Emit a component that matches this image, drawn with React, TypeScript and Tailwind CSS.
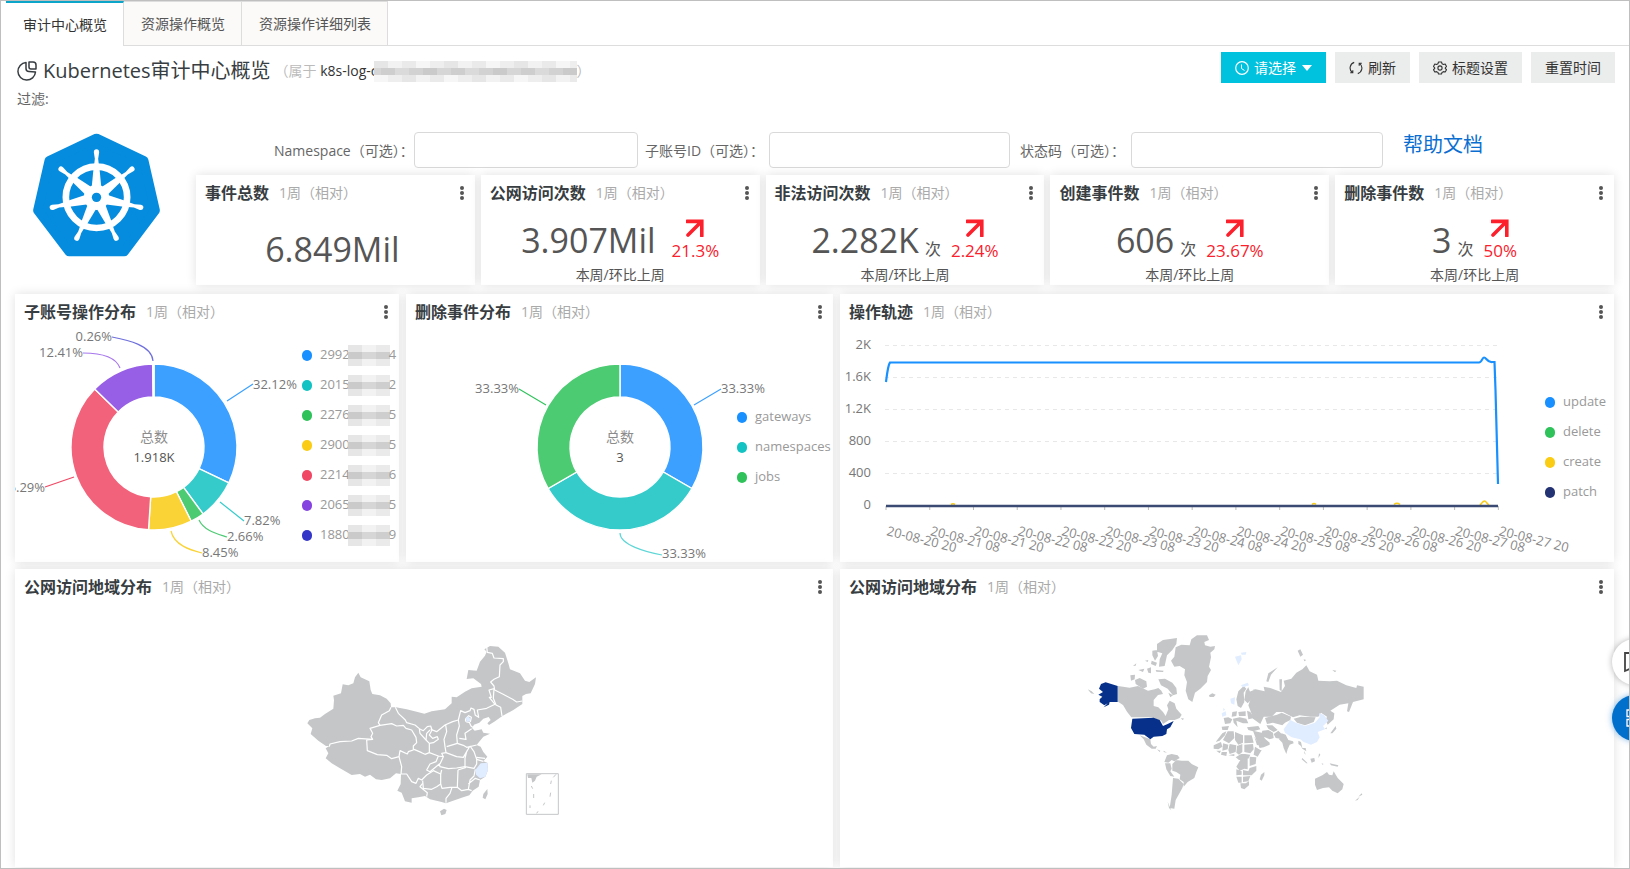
import React, { useState } from 'react';

type Slice = { name: string; tail?: string; value: number; fill: string; dot: string };
type Leader = { d: string; x: number; y: number; end?: boolean; text: string; color: string };

const tabs = ['审计中心概览', '资源操作概览', '资源操作详细列表'];

const stats = [
    { title: '事件总数', value: '6.849Mil' },
    { title: '公网访问次数', value: '3.907Mil', unit: '', rate: '21.3%' },
    { title: '非法访问次数', value: '2.282K', unit: '次', rate: '2.24%' },
    { title: '创建事件数', value: '606', unit: '次', rate: '23.67%' },
    { title: '删除事件数', value: '3', unit: '次', rate: '50%' },
];

const accounts: Slice[] = [
    { name: '2992', tail: '4', value: 32.12, fill: '#3ba0ff', dot: '#1890ff' },
    { name: '2015', tail: '2', value: 7.82, fill: '#36cbcb', dot: '#13c2c2' },
    { name: '2276', tail: '5', value: 2.66, fill: '#4dcb73', dot: '#2fc25b' },
    { name: '2900', tail: '5', value: 8.45, fill: '#fad337', dot: '#facc14' },
    { name: '2214', tail: '6', value: 36.28, fill: '#f2637b', dot: '#f04864' },
    { name: '2065', tail: '5', value: 12.41, fill: '#975fe5', dot: '#8543e0' },
    { name: '1880', tail: '9', value: 0.26, fill: '#5254cf', dot: '#3436c7' },
];

const accountLeaders: Leader[] = [
    { d: 'M138 33C137 17 112 12 97 9', x: 97, y: 13, end: true, text: '0.26%', color: '#6f70dc' },
    { d: 'M105 40C100 27 80 25 68 25', x: 68, y: 29, end: true, text: '12.41%', color: '#a878ec' },
    { d: 'M212 73L238 56', x: 238, y: 61, text: '32.12%', color: '#3ba0ff' },
    { d: 'M59 149L30 159', x: 30, y: 164, end: true, text: '36.29%', color: '#f04864' },
    { d: 'M205 174L229 193', x: 229, y: 197, text: '7.82%', color: '#36cbcb' },
    { d: 'M184 192C189 203 203 206 212 209', x: 212, y: 213, text: '2.66%', color: '#4dcb73' },
    { d: 'M156 203C159 217 175 222 187 225', x: 187, y: 229, text: '8.45%', color: '#fad337' },
];

const deletions: Slice[] = [
    { name: 'gateways', value: 1, fill: '#3ba0ff', dot: '#1890ff' },
    { name: 'namespaces', value: 1, fill: '#36cbcb', dot: '#13c2c2' },
    { name: 'jobs', value: 1, fill: '#4dcb73', dot: '#2fc25b' },
];

const deletionLeaders: Leader[] = [
    { d: 'M288 77L315 61', x: 315, y: 65, text: '33.33%', color: '#3ba0ff' },
    { d: 'M140 77L113 61', x: 113, y: 65, end: true, text: '33.33%', color: '#2fc25b' },
    { d: 'M214 205C214 217 240 224 256 227', x: 256, y: 230, text: '33.33%', color: '#5fd6d6' },
];

const traceSeries = [
    { name: 'update', dot: '#1890ff' },
    { name: 'delete', dot: '#2fc25b' },
    { name: 'create', dot: '#facc14' },
    { name: 'patch', dot: '#223273' },
];

const yTicks = ['2K', '1.6K', '1.2K', '800', '400', '0'];
const xTicks = [
    '20 20', '21 08', '21 20', '22 08', '22 20', '23 08', '23 20', '24 08',
    '24 20', '25 08', '25 20', '26 08', '26 20', '27 08', '27 20',
];

function Mosaic({ cols, rows, size, className }: { cols: number; rows: number; size: number; className?: string }) {
    const cells = Array.from({ length: cols * rows }, (_, i) => {
        const row = Math.floor(i / cols);
        const noise = ((Math.floor(i / 2) * 3 + row) % 5) * 4;
        return row === 1 ? 202 + noise : 230 + noise;
    });
    return (
        <span
            aria-hidden="true"
            className={`inline-grid shrink-0 ${className ?? ''}`}
            style={{ gridTemplateColumns: `repeat(${cols}, ${size}px)`, gridAutoRows: `${size}px` }}
        >
            {cells.map((c, i) => (
                <span key={i} style={{ backgroundColor: `rgb(${c},${c},${c})` }} />
            ))}
        </span>
    );
}

function KubernetesLogo() {
    const spokes = Array.from({ length: 7 }, (_, i) => (i * 360) / 7);
    return (
        <svg viewBox="70 38 380 372" className="h-[124px] w-[127px]" role="img" aria-label="Kubernetes">
            <path
                d="M260 54L402 121 436 270 343 394 178 394 84 270 118 121Z"
                fill="#058cde"
                stroke="#058cde"
                strokeWidth="28"
                strokeLinejoin="round"
            />
            <circle cx="260" cy="231" r="92" fill="none" stroke="#fff" strokeWidth="20" />
            {spokes.map((a) => (
                <g key={a} transform={`translate(260 231) rotate(${a})`} fill="#fff">
                    <path d="M-9 -86L9 -86 14 -34 -14 -34Z" />
                    <path d="M-7 -98L-5 -116 -8 -135Q-8 -144 0 -144Q8 -144 8 -135L5 -116 7 -98Z" />
                </g>
            ))}
            <circle cx="260" cy="231" r="38" fill="#fff" />
            <circle cx="260" cy="231" r="14" fill="#058cde" />
        </svg>
    );
}

function Card({ title, className, children }: { title: string; className?: string; children: React.ReactNode }) {
    return (
        <section className={`flex min-w-0 flex-col overflow-hidden bg-white shadow-[0_0_10px_rgba(0,0,0,0.12)] ${className ?? ''}`}>
            <header className="flex h-[34px] shrink-0 items-center px-[9px] pt-0.5">
                <h2 className="text-base font-bold whitespace-nowrap text-[#373d41]">{title}</h2>
                <span className="ml-2.5 flex-1 text-sm whitespace-nowrap text-[#aaa]">1周（相对）</span>
                <button type="button" aria-label={`${title}菜单`} className="flex h-5 w-2 flex-col items-center justify-center gap-px">
                    <span className="size-1 rounded-full bg-[#555]" />
                    <span className="size-1 rounded-full bg-[#555]" />
                    <span className="size-1 rounded-full bg-[#555]" />
                </button>
            </header>
            {children}
        </section>
    );
}

function StatBody({ value, unit, rate }: { value: string; unit?: string; rate?: string }) {
    if (!rate) {
        return <p className="mt-2 pr-1.5 text-center text-[34px] leading-[64px] text-[#555]">{value}</p>;
    }
    return (
        <div className="mt-1 flex flex-col items-center text-[#555]">
            <div className="flex h-[52px] items-end justify-center">
                <span className="text-[34px] leading-[50px]">{value}</span>
                <span className="ml-1.5 text-base leading-8">{unit}</span>
                <span className="ml-2.5 flex flex-col items-center text-[#fb202c]">
                    <svg viewBox="0 0 18 18" className="size-[18px]" fill="none" stroke="currentColor" strokeWidth="3.6">
                        <path d="M1 2.4H15.8V17M15 3L2 16" strokeLinecap="round" />
                    </svg>
                    <span className="text-[17px] leading-7">{rate}</span>
                </span>
            </div>
            <p className="text-sm leading-5">本周/环比上周</p>
        </div>
    );
}

function Donut({ data, cx, cy, total, leaders }: { data: Slice[]; cx: number; cy: number; total: string; leaders: Leader[] }) {
    const R = 83;
    const r = 50;
    const sum = data.reduce((s, d) => s + d.value, 0);
    const point = (t: number, radius: number) =>
        `${(cx + radius * Math.sin(t * 2 * Math.PI)).toFixed(2)} ${(cy - radius * Math.cos(t * 2 * Math.PI)).toFixed(2)}`;
    let acc = 0;
    return (
        <>
            {data.map((d) => {
                const a = acc / sum;
                acc += d.value;
                const b = acc / sum;
                const large = b - a > 0.5 ? 1 : 0;
                return (
                    <path
                        key={d.name}
                        d={`M${point(a, R)}A${R} ${R} 0 ${large} 1 ${point(b, R)}L${point(b, r)}A${r} ${r} 0 ${large} 0 ${point(a, r)}Z`}
                        fill={d.fill}
                        stroke="#fff"
                        strokeWidth="1.4"
                    />
                );
            })}
            {leaders.map((l) => (
                <g key={l.d}>
                    <path d={l.d} fill="none" stroke={l.color} strokeWidth="1.2" />
                    <text x={l.x} y={l.y} textAnchor={l.end ? 'end' : 'start'} fontSize="13" fill="#777">{l.text}</text>
                </g>
            ))}
            <text x={cx} y={cy - 5} textAnchor="middle" fontSize="14" fill="#8c8c8c">总数</text>
            <text x={cx} y={cy + 15} textAnchor="middle" fontSize="13" fill="#555">{total}</text>
        </>
    );
}

function Legend({ items, className }: { items: { name: string; dot: string; tail?: string }[]; className?: string }) {
    return (
        <ul className={`min-w-0 flex-1 overflow-hidden ${className ?? ''}`}>
            {items.map((it) => (
                <li key={it.name} className="flex h-[30px] items-center text-[13px] text-[#999]">
                    <span className="mr-2 h-[11px] w-2.5 shrink-0 rounded-full" style={{ backgroundColor: it.dot }} />
                    <span>{it.name}</span>
                    {it.tail && (
                        <>
                            <Mosaic cols={6} rows={3} size={7} className="-ml-0.5" />
                            <span className="-ml-px">{it.tail}</span>
                        </>
                    )}
                </li>
            ))}
        </ul>
    );
}

function TraceChart() {
    return (
        <svg viewBox="0 0 700 230" className="h-[230px] w-[700px] shrink-0 overflow-visible">
            {yTicks.map((t, i) => (
                <g key={t}>
                    {i < 5 && <path d={`M45 ${15.5 + i * 32}H661`} stroke="#e8e8e8" strokeDasharray="4 4" />}
                    <text x="31" y={19 + i * 32} textAnchor="end" fontSize="13" fill="#777">{t}</text>
                </g>
            ))}
            {xTicks.map((t, i) => {
                const x = 46 + i * 43.74;
                return (
                    <g key={t}>
                        <path d={`M${x} 176V180`} stroke="#bbb" />
                        <text x={x} y="205" fontSize="13" fill="#888" transform={`rotate(14 ${x} 205)`}>{`20-08-${t}`}</text>
                    </g>
                );
            })}
            <path d="M111 174.5Q113 173 115 174.5M472 174.5Q474 172.5 476 174.5M554 174.5Q557 172 560 174.5M640 175C642 173 643 171 644.5 171C646 171 647 174 649 175" fill="none" stroke="#facc14" strokeWidth="1.6" />
            <path d="M46 176H658" stroke="#3b4a72" strokeWidth="2.4" />
            <path
                d="M46 52C47 44 48 35 50 32.5H639C642 32.5 642 27.5 644 27.5C646.5 27.5 647 32.5 652 32H654.5L655.5 60L658 154"
                fill="none"
                stroke="#1890ff"
                strokeWidth="2.2"
            />
        </svg>
    );
}

function ChinaMap() {
    return (
        <svg viewBox="-33 0 870 630" className="mx-auto mt-[17px] h-[210px] w-[290px]" role="img" aria-label="中国地图">
            <path
                fill="#c4c6c8"
                d="M52 310L58 300 75 295 90 293 105 282 130 266 132 240 130 227 153 220 158 193 175 196 190 190 195 172 205 158 212 172 238 184 242 210 247 222 270 226 290 236 302 250 303 262 318 262 350 268 380 275 403 281 425 274 465 268 485 250 485 230 500 232 525 215 545 205 575 200 573 192 550 175 530 177 535 150 560 152 570 125 585 107 590 95 583 88 600 78 625 80 645 98 655 130 660 148 690 160 705 182 718 186 738 172 735 192 722 220 708 222 697 228 697 252 670 270 637 288 615 304 597 315 592 310 602 300 596 291 580 296 568 308 552 314 546 324 554 332 575 328 580 338 600 341 580 350 567 366 560 375 572 380 580 396 592 410 580 424 592 428 594 450 586 470 570 480 566 500 548 512 538 526 515 533 485 544 468 550 452 545 420 538 405 528 385 532 365 535 365 548 345 544 335 518 322 512 332 492 333 462 318 460 300 475 275 480 258 478 240 464 225 470 210 462 185 465 150 445 125 430 107 415 115 400 107 385 118 378 108 378 85 362 62 342 67 325Z"
            />
            <path fill="#c4c6c8" d="M580 522L592 507 593 522 586 538 578 533ZM450 574L462 566 470 570 466 582 454 586Z" />
            <g fill="none" stroke="#fff" strokeWidth="3.6" strokeLinejoin="round">
                <path d="M303 262L298 272 275 285 265 308 270 316 240 325 248 340 243 350 248 358 205 355 185 363 150 365 120 372 118 380" />
                <path d="M270 316L305 311 320 318 340 316 348 325 365 330 378 352 380 368 370 378 370 390 355 395 352 402 330 392 327 410 305 416 290 406 262 404 232 392 230 360 248 358" />
                <path d="M316 262L325 280 346 300 350 308 375 315 388 326 390 340 408 360 418 370 418 398 405 403 395 398 372 388" />
                <path d="M388 326L400 332 412 320 422 318 426 330 418 345 428 355 442 350 445 358 430 368 418 370M408 360L410 340 420 330" />
                <path d="M422 328L440 335 465 315 488 305 505 300 512 272 525 278 540 272 543 264 552 268 556 286 566 292 562 270 590 265 615 253 598 232 604 232 597 210 612 206" />
                <path d="M590 80L592 97 607 100 612 114 640 116 640 125 630 135 628 170 612 178 602 186 612 198 614 210 638 222 668 238 680 246 697 243" />
                <path d="M612 206L610 235 618 255 632 262 636 288" />
                <path d="M467 315L470 335 462 358 465 380 468 398 455 400 460 410" />
                <path d="M505 300L508 318 500 345 502 370 470 380M508 355L528 358 525 340 545 326M528 295Q524 304 530 306L538 307 543 318 548 322M528 295L536 287 544 292 541 306" />
                <path d="M502 370L520 376 530 382 560 375M468 398L500 410 520 412 530 395 540 378M540 378L552 395 560 418 580 424M560 412L585 415M530 395L525 415 525 440 552 445 560 432 560 418" />
                <path d="M418 398L445 408 438 425 420 432 410 450 420 455 448 432 450 440 475 446 500 444 525 440M445 408L460 410 450 432" />
                <path d="M333 462L335 440 327 410M333 462L350 462 365 485 378 490 385 475 395 480 410 465 430 452 452 462 452 492 440 500 425 508 400 505 398 482" />
                <path d="M452 462L455 450M452 492L456 505 480 502 502 502 504 450M398 490L390 500 412 518 410 530M486 502L480 520 468 535 468 548M502 502L515 512 535 508 545 512M535 508L540 480 552 468 556 448M504 450L528 442M535 492L556 475 570 480" />
            </g>
            <path fill="#e0ecff" d="M556 450L572 430 592 428 594 450 586 470 570 475 558 464Z" />
            <path fill="#e0ecff" d="M527 293L535 289 541 296 540 304 530 306Z" />
            <path fill="none" stroke="#c4c6c8" strokeWidth="3" d="M709 461H805V583H709Z" />
            <path fill="#c4c6c8" d="M712 463H755L740 470 735 482 727 488 724 474 714 474Z" />
            <path fill="none" stroke="#c4c6c8" strokeWidth="3" d="M798 463L790 472M784 482L782 492M782 518L780 530M764 548L760 556M744 574L740 580M720 556V564M731 522V534M724 498L728 506" />
        </svg>
    );
}

function WorldMap() {
    return (
        <svg viewBox="-8 0 900 630" className="mx-auto mt-[17px] h-[210px] w-[300px]" role="img" aria-label="世界地图">
            <g fill="#c4c6c8">
                {/* Canada and the arctic islands */}
                <path d="M115 198L150 203 175 198 205 212 225 208 236 204 245 212 250 222 235 225 222 240 222 258 236 262 250 276 258 288 266 268 262 256 270 242 285 250 290 266 306 284 300 294 285 300 268 300 250 312 245 302 215 292 155 292 142 275 130 255 115 245Z" />
                <path d="M232 72L250 60 292 54 290 72 278 90 262 106 255 138 238 140 240 118 248 100 232 95ZM218 92L232 90 235 108 226 122 218 106ZM152 166L166 164 165 178 154 182ZM166 180L180 174 200 184 202 200 190 206 168 192ZM236 178L256 176 278 188 290 204 292 222 280 226 264 206 244 196ZM176 150L194 146 190 156ZM202 146L214 142 214 160 206 158ZM228 150L252 152 250 156 230 155ZM160 138L170 130 168 137ZM196 122L206 120 204 126ZM216 122L232 128 228 138 214 132ZM266 218L280 226 272 232ZM304 294L314 296 308 300Z" />
                <path d="M24 208L36 214 44 222 34 220Z" />
                {/* Greenland, Iceland */}
                <path d="M274 122L284 110 288 82 305 74 330 76 335 58 352 46 382 46 388 60 374 66 376 76 392 80 406 78 404 88 392 98 394 112 388 140 394 150 384 168 382 186 362 206 346 218 338 246 326 238 318 212 322 186 314 166 316 148 300 138 284 140Z" />
                <path d="M388 226L398 220 408 224 402 231 390 231Z" />
                {/* Mexico and Central America */}
                <path d="M180 346L212 358 214 372 222 380 232 378 228 386 216 386 200 374 192 358ZM232 388L242 392 240 396ZM252 392L262 398 252 396Z" />
                {/* South America */}
                <path d="M262 406L276 402 294 406 300 414 284 424 276 420 266 428 254 426ZM256 430L272 430 276 446 272 454 284 470 272 468 260 448ZM278 432L290 420 306 422 326 422 336 432 356 442 350 456 344 474 324 486 312 500 312 486 300 478 302 464 290 456 278 452ZM280 474L296 476 312 492 308 504 296 526 288 540 284 566 270 564 276 524ZM264 545L274 570 282 578 268 564Z" />
                {/* Russia and Asia */}
                <path d="M508 216L528 208 555 214 552 200 572 204 604 216 616 198 612 182 635 176 650 158 668 148 680 136 690 154 712 164 716 182 750 184 772 182 800 196 830 204 832 196 852 200 852 238 820 246 808 276 802 274 806 250 780 254 752 272 764 280 762 298 744 314 738 300 742 290 724 278 716 290 692 290 660 286 640 292 610 276 590 276 576 290 552 290 542 312 520 296 516 282 506 256 512 240Z" />
                <path d="M654 92L662 88 670 104 662 110ZM758 150L770 152 766 157ZM672 118L680 120 674 124ZM560 184L566 160 594 142 574 164 566 186ZM599 178L607 178 606 214 600 210Z" />
                <path d="M556 294L592 284 606 278 634 290 632 300 616 308 608 316 580 308 562 312ZM642 296L664 290 708 292 702 306 676 316 652 308Z" />
                <path d="M560 316L578 316 594 330 582 336 566 326ZM548 332L566 330 580 338 582 354 570 358 552 350 546 340ZM520 332L546 338 556 356 570 368 570 374 552 382 540 384 530 360ZM582 342L596 332 606 342 602 356 588 354ZM606 340L618 344 626 360 640 364 642 370 630 374 624 388 620 402 612 384 608 368 598 358ZM656 362L664 366 668 384 678 384 680 394 668 386 664 378 656 372ZM502 322L536 318 542 328 520 334 506 330Z" />
                <path d="M668 414L684 430 680 430 666 418ZM692 416L704 414 706 424 696 428ZM716 414L718 400 722 404ZM674 392L678 404 674 400ZM750 430L776 436 774 440 754 436ZM726 430L732 432 728 434ZM736 326L742 322 740 328ZM752 340L768 318 770 326 758 340Z" />
                {/* Europe */}
                <path d="M470 238L476 214 492 198 500 206 492 218 494 246 484 264 474 258ZM494 240L498 214 506 202 512 218 514 240 504 250ZM520 208L530 210 526 214ZM432 294L446 292 458 298 452 310 436 312ZM426 320L448 318 444 330 428 330ZM458 276L472 274 470 288 456 290ZM476 276L498 274 498 288 478 288ZM502 272L512 276 524 294 506 298ZM480 292L500 296 506 310 490 310 470 302 474 322 462 308 460 296Z" />
                {/* Africa */}
                <path d="M428 340L440 334 436 346 420 362 408 366ZM444 334L462 334 464 354 448 370 430 360ZM466 336L490 346 490 368 476 374 466 360ZM494 346L516 346 522 368 494 370ZM524 350L534 366 544 372 532 376ZM402 376L424 366 428 380 416 388 402 386ZM430 370L446 374 444 388 428 392ZM450 372L470 376 468 396 450 402 446 390ZM472 378L488 372 488 396 478 404 470 398ZM494 374L520 372 522 388 512 400 494 396ZM526 380L542 390 546 390 534 410 522 404ZM410 392L424 392 420 400ZM426 396L442 396 440 408 424 404ZM446 406L464 402 464 408ZM468 412L484 402 496 402 512 404 506 416 478 420ZM482 420L504 416 504 448 494 446 480 452 470 440ZM510 410L530 412 528 432 510 438ZM470 448L486 454 486 464 470 466ZM490 450L506 454 510 444 530 438 530 452 516 466 490 466ZM470 470L486 470 486 488 476 488ZM490 470L512 468 506 484 490 486ZM482 490L498 490 508 484 508 496 494 508 484 504ZM544 464L554 456 554 466 546 482 540 478Z" />
                {/* Australia, New Zealand */}
                <path d="M706 476L728 466 742 456 748 464 758 466 762 454 774 474 792 492 788 508 774 520 758 512 748 502 730 504 712 510 706 494ZM836 530L846 520 848 524ZM826 542L840 530 834 540Z" />
            </g>
            <g fill="#06308a">
                <path d="M114 198L114 246 90 246 88 254 72 262 84 250 74 256 60 246 60 238 68 230 56 224 70 216 58 206 64 192 78 187Z" />
                <path d="M158 296L222 293 240 300 250 318 264 312 282 303 272 322 262 328 260 342 248 348 222 350 212 358 194 344 164 342 154 324Z" />
            </g>
            <g fill="#e0ecff">
                <path d="M612 328L632 300 648 308 676 318 706 308 720 292 718 280 732 284 746 302 730 318 736 328 714 336 720 352 712 366 694 374 672 366 662 358 636 352 616 338Z" />
                <path d="M466 110L484 106 486 118 476 136ZM484 98L500 96 498 104 486 104ZM452 236L466 232 464 254 454 250ZM484 196L504 188 508 196 490 202ZM426 280L438 274 440 286 428 290ZM430 264L436 268 432 274Z" />
            </g>
        </svg>
    );
}

function Header() {
    const btn = 'flex h-[31px] items-center px-3.5 text-sm whitespace-nowrap';
    return (
        <div className="flex items-start justify-between pt-1.5 pr-[14px] pl-4">
            <div>
                <div className="flex h-[38px] items-center">
                    <svg viewBox="0 0 20 20" className="mr-1.5 size-5" fill="none" stroke="#373d41" strokeWidth="1.5" strokeLinejoin="round">
                        <path d="M9 1.5A8.8 8.8 0 1 0 18.5 11L12 10.5Q9 10.5 9 7.5ZM12 1H16Q19 1 19 4V8H14Q12 8 12 6Z" />
                    </svg>
                    <h1 className="text-xl whitespace-nowrap text-[#373d41]">Kubernetes审计中心概览</h1>
                    <p className="ml-1 flex items-center text-sm whitespace-nowrap text-[#bbb]">
                        （属于&nbsp;<span className="text-[#333]">k8s-log-c</span>
                        <Mosaic cols={29} rows={3} size={7} className="-ml-1" />
                        ）
                    </p>
                </div>
                <p className="text-sm leading-[18px] text-[#666]">过滤:</p>
            </div>
            <div className="flex gap-[9px] text-[#333]">
                <button type="button" className={`${btn} bg-[#00c1de] text-white`}>
                    <svg viewBox="0 0 14 14" className="mr-[5px] size-3.5" fill="none" stroke="currentColor">
                        <circle cx="7" cy="7" r="6.3" strokeWidth="1.2" />
                        <path d="M6.5 3.5V7.5L9.5 9.5" />
                    </svg>
                    请选择
                    <svg viewBox="0 0 10 6" className="ml-1.5 h-1.5 w-2.5" fill="currentColor">
                        <path d="M0 0H10L5 6Z" />
                    </svg>
                </button>
                <button type="button" className={`${btn} bg-[#ebecec]`}>
                    <svg viewBox="0 0 14 14" className="mr-[5px] size-3.5" fill="none" stroke="currentColor" strokeWidth="1.1">
                        <path d="M5.2 1.4A5.8 5.8 0 0 0 3.2 11.4M8.8 12.6A5.8 5.8 0 0 0 10.8 2.6M1.2 11.7H3.8V9.2M12.8 2.3H10.2V4.800" />
                    </svg>
                    刷新
                </button>
                <button type="button" className={`${btn} bg-[#ebecec]`}>
                    <svg viewBox="0 0 14 14" className="mr-[5px] size-3.5" fill="none" stroke="currentColor" strokeWidth="1.1" strokeLinejoin="round">
                        <path d="M5.5 1H8.5L9 2.7 10.5 3.5 12.2 3 13.5 5.5 12.3 6.8V7.5L13.5 8.7 12.2 11 10.5 10.6 9 11.5 8.5 13H5.5L5 11.5 3.5 10.6 1.8 11 .5 8.7 1.7 7.5V6.8L.5 5.5 1.8 3 3.5 3.5 5 2.7Z" />
                        <circle cx="7" cy="7" r="2.1" />
                    </svg>
                    标题设置
                </button>
                <button type="button" className={`${btn} bg-[#ebecec]`}>重置时间</button>
            </div>
        </div>
    );
}

function Filters() {
    const input = 'h-9 min-w-0 rounded border border-[#d9d9d9] bg-white px-3 text-sm outline-none';
    const label = 'shrink-0 pt-0.5 text-sm whitespace-nowrap text-[#666]';
    return (
        <form className="flex items-center pl-[78px]" onSubmit={(e) => e.preventDefault()}>
            <label htmlFor="namespace" className={`${label} w-[140px]`}>Namespace（可选）：</label>
            <input id="namespace" className={`${input} w-[224px]`} />
            <label htmlFor="account" className={`${label} ml-[7px] w-[124px]`}>子账号ID（可选）：</label>
            <input id="account" className={`${input} w-[241px]`} />
            <label htmlFor="code" className={`${label} ml-2.5 w-[111px]`}>状态码（可选）：</label>
            <input id="code" className={`${input} w-[252px]`} />
            <a href="#help" className="ml-5 pb-2.5 text-xl whitespace-nowrap text-[#0a6ed1]">帮助文档</a>
        </form>
    );
}

function App() {
    const [active, setActive] = useState(0);

    return (
        <main className="relative flex min-h-screen flex-col overflow-hidden border border-[#bfbfbf] bg-white font-['Open_Sans','Noto_Sans_CJK_SC',sans-serif]">
            <nav role="tablist" className="flex h-[45px] shrink-0">
                <span className="w-[5px] border-b border-transparent" />
                {tabs.map((t, i) => (
                    <button
                        key={t}
                        type="button"
                        role="tab"
                        aria-selected={i === active}
                        onClick={() => setActive(i)}
                        className={
                            i === active
                                ? 'border-t-2 border-r border-t-[#0aa5c8] border-r-[#ddd] pr-4 pl-[17px] text-sm text-[#333]'
                                : 'border-t border-r border-b border-[#ddd] bg-[#fbfaf8] pr-4 pl-[17px] text-sm text-[#555]'
                        }
                    >
                        {t}
                    </button>
                ))}
                <span className="flex-1 border-b border-[#ddd]" />
            </nav>

            <Header />

            <div className="flex flex-1 flex-col gap-[9px] pt-[23px] pr-[15px] pb-px pl-[14px]">
                <div className="flex">
                    <div className="flex w-[181px] shrink-0 pt-0.5 pl-[18px]">
                        <KubernetesLogo />
                    </div>
                    <div className="min-w-0 flex-1">
                        <Filters />
                        <div className="mt-1.5 grid grid-cols-5 gap-1.5">
                            {stats.map((s) => (
                                <Card key={s.title} title={s.title} className="h-[110px]">
                                    <StatBody value={s.value} unit={s.unit} rate={s.rate} />
                                </Card>
                            ))}
                        </div>
                    </div>
                </div>

                <div className="grid grid-cols-[384fr_427fr_774fr] gap-[7px]">
                    <Card title="子账号操作分布">
                        <div className="flex">
                            <svg viewBox="0 0 285 234" className="h-[234px] w-[285px] shrink-0">
                                <Donut data={accounts} cx={139} cy={119} total="1.918K" leaders={accountLeaders} />
                            </svg>
                            <Legend items={accounts} className="pt-3 pl-0.5" />
                        </div>
                    </Card>
                    <Card title="删除事件分布">
                        <div className="flex">
                            <svg viewBox="0 0 331 234" className="h-[234px] w-[331px] shrink-0 overflow-visible">
                                <Donut data={deletions} cx={214} cy={119} total="3" leaders={deletionLeaders} />
                            </svg>
                            <Legend items={deletions} className="pt-[74px]" />
                        </div>
                    </Card>
                    <Card title="操作轨迹">
                        <div className="flex pt-0.5">
                            <TraceChart />
                            <Legend items={traceSeries} className="pt-[57px] pl-[5px]" />
                        </div>
                    </Card>
                </div>

                <div className="-mt-0.5 grid flex-1 grid-cols-[818fr_774fr] gap-[7px]">
                    <Card title="公网访问地域分布">
                        <ChinaMap />
                    </Card>
                    <Card title="公网访问地域分布">
                        <WorldMap />
                    </Card>
                </div>
            </div>

            <div className="absolute top-[638px] -right-[29px] flex flex-col gap-2.5">
                <button type="button" aria-label="反馈" className="flex size-[46px] items-center justify-center rounded-full bg-white text-[#444] shadow-[0_0_6px_rgba(0,0,0,0.3)]">
                    <svg viewBox="0 0 22 22" className="size-[22px]" fill="none" stroke="currentColor" strokeWidth="1.8">
                        <path d="M1 2H21V17H8L1 20Z" />
                    </svg>
                </button>
                <button type="button" aria-label="应用" className="flex size-[46px] items-center justify-center rounded-full bg-[#0070cc] text-white shadow-[0_0_6px_rgba(0,112,204,0.5)]">
                    <svg viewBox="0 0 18 18" className="size-[18px]" fill="none" stroke="currentColor" strokeWidth="1.3">
                        <path d="M1 1H7.5V7.5H1ZM10.5 1H17V7.5H10.5ZM1 10.5H7.5V17H1ZM10.5 10.5H17V17H10.5Z" />
                    </svg>
                </button>
            </div>
        </main>
    );
}

export default App;
